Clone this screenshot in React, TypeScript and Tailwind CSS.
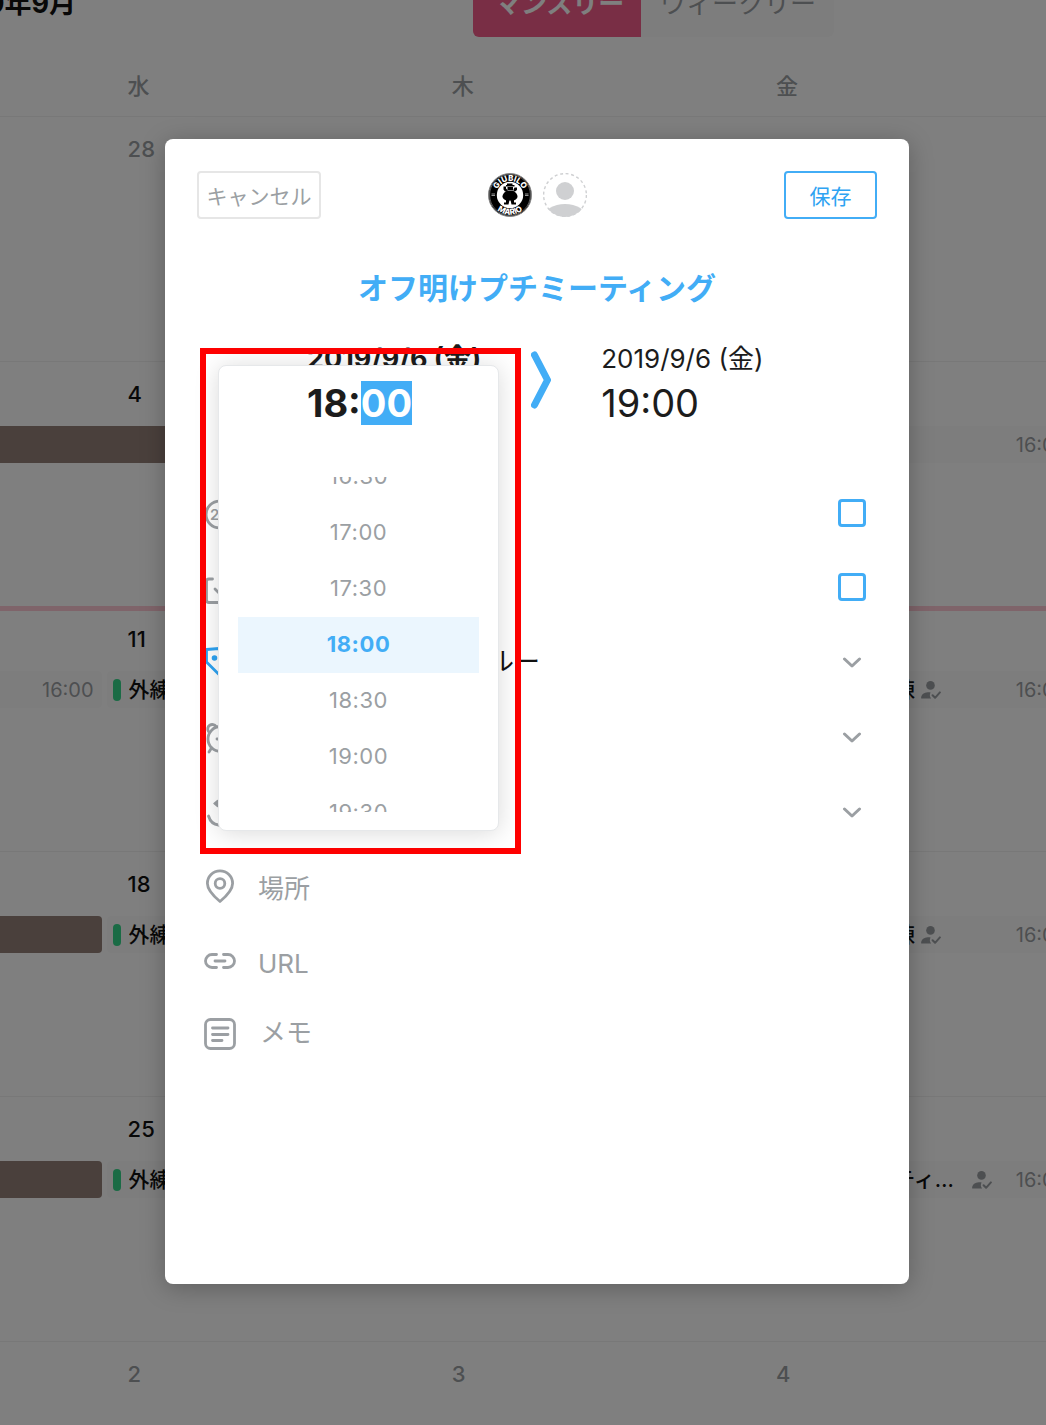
import { useEffect, useRef } from "react";
import type { ReactNode } from "react";

const TIMES = ["16:30", "17:00", "17:30", "18:00", "18:30", "19:00", "19:30"];
const SELECTED_TIME = "18:00";

type Event = { title: string; time: string };
type Week = {
  wed: string;
  thu: string;
  fri: string;
  muted?: boolean;
  today?: boolean;
  lead?: "bar" | "longBar" | "event";
  wedEvent?: Event;
  friEvent?: Event;
};

const WEEKS: Week[] = [
  { wed: "28", thu: "29", fri: "30", muted: true },
  { wed: "4", thu: "5", fri: "6", lead: "longBar", friEvent: { title: "外練", time: "16:00" } },
  {
    wed: "11",
    thu: "12",
    fri: "13",
    today: true,
    lead: "event",
    wedEvent: { title: "外練", time: "16:00" },
    friEvent: { title: "外練: 居残り練", time: "16:00" },
  },
  {
    wed: "18",
    thu: "19",
    fri: "20",
    lead: "bar",
    wedEvent: { title: "外練", time: "16:00" },
    friEvent: { title: "外練: 居残り練", time: "16:00" },
  },
  {
    wed: "25",
    thu: "26",
    fri: "27",
    lead: "bar",
    wedEvent: { title: "外練", time: "16:00" },
    friEvent: { title: "外練後: ミーティング", time: "16:00" },
  },
  { wed: "2", thu: "3", fri: "4", muted: true },
];

const UserCheckIcon = () => (
  <svg viewBox="0 0 20 18" className="h-[18px] w-5 shrink-0" fill="#9b9fa3">
    <circle cx="9.5" cy="4.4" r="4.3" />
    <path d="M.8 17.6c-.6 0-.8-.3-.7-.9.4-3.200 3-5.200 6.600-5.400 1.200-.1 2.200 0 2.900.2-1.100 1.700-1 4.200.5 6.100z" />
    <path d="M11.600 14.200l2.500 2.600 4.800-5.400" fill="none" stroke="#9b9fa3" strokeWidth="2" strokeLinecap="round" strokeLinejoin="round" />
  </svg>
);

const EventCard = ({ event }: { event: Event }) => (
  <div className="mx-0.5 flex h-[37px] items-center gap-2 rounded bg-[#fbfbfb] pr-2 pl-1.5 whitespace-nowrap">
    <span className="h-[22px] w-2 shrink-0 rounded-full bg-[#34d68a]" />
    <div className="flex min-w-0 flex-1 items-center gap-1.5">
      <span className="min-w-0 truncate text-[21px] leading-[37px] font-medium text-[#111]">{event.title}</span>
      <UserCheckIcon />
    </div>
    <span className="ml-4 text-[20px] text-[#9b9fa3]">{event.time}</span>
  </div>
);

const DayCell = ({ day, muted, event }: { day: string; muted?: boolean; event?: Event }) => (
  <div className="min-w-0">
    <div className={`flex h-16 items-center pl-[23px] text-[22px] font-medium ${muted ? "text-[#9b9fa3]" : "text-[#111]"}`}>
      {day}
    </div>
    {event && <EventCard event={event} />}
  </div>
);

const WeekRow = ({ week }: { week: Week }) => (
  <div
    className={`grid h-[245px] shrink-0 grid-cols-[10%_31%_31%_31%] ${
      week.today ? "border-t-[5px] border-[#ffc8d4]" : "border-t border-[#f0f0f0]"
    }`}
  >
    <div className={`pt-16 whitespace-nowrap ${week.today ? "-mt-1" : ""}`}>
      {week.lead === "bar" && <div className="mr-[3px] h-[37px] rounded-r bg-[#948078]" />}
      {week.lead === "longBar" && <div className="-mr-20 h-[37px] bg-[#948078]" />}
      {week.lead === "event" && (
        <div className="mr-[3px] flex h-[37px] items-center justify-end rounded-r bg-[#fbfbfb] pr-2 text-[20px] text-[#9b9fa3]">
          16:00
        </div>
      )}
    </div>
    {[
      { day: week.wed, event: week.wedEvent },
      { day: week.thu },
      { day: week.fri, event: week.friEvent },
    ].map(({ day, event }) => (
      <div key={day} className={`min-w-0 ${week.today ? "-mt-1" : ""}`}>
        <DayCell day={day} muted={week.muted} event={event} />
      </div>
    ))}
  </div>
);

const Calendar = () => (
  <div className="flex min-h-screen flex-col">
    <header className="-mt-[29px] flex h-[66px] items-center">
      <h1 className="flex w-[76px] justify-end text-[27px] font-bold whitespace-nowrap text-[#111]">2019年9月</h1>
      <div className="ml-[38%] flex h-full w-[361px] text-[26px]">
        <button type="button" className="w-[168px] rounded-l-md bg-[#f25c8a] pb-0.5 pl-1 font-bold text-white">
          マンスリー
        </button>
        <button type="button" className="flex-1 rounded-r-md bg-[#fbfbfb] pb-0.5 whitespace-nowrap text-[#9b9fa3]">
          ウィークリー
        </button>
      </div>
    </header>
    <div className="grid h-[79px] grid-cols-[10%_31%_31%_31%] pt-5 text-[22px] leading-[58px] font-medium text-[#9b9fa3]">
      <span />
      <span className="pl-[23px]">水</span>
      <span className="pl-[23px]">木</span>
      <span className="pl-[23px]">金</span>
    </div>
    {WEEKS.map((week) => (
      <WeekRow key={week.wed} week={week} />
    ))}
  </div>
);

const TeamLogo = () => (
  <svg viewBox="0 0 44 44" className="size-11">
    <circle cx="22" cy="22" r="21.500" fill="#000" stroke="#888" />
    <circle cx="22" cy="22" r="20.400" fill="none" stroke="#bbb" strokeWidth=".5" />
    <circle cx="22" cy="22" r="13.200" fill="#fff" />
    <g fill="#000">
      <path d="M19 10.500h5.500v1.500h2v1.500H18V12h1z" />
      <path d="M19.500 14h5.500v3.500h-5.500zM15.500 13.500h2.500v2l1.500 1.500v1.500h-2.500l-1.500-2zM26.500 14.500h2.500v2.500l-2 1.500h-1.500v-2z" />
      <path d="M18.500 18h7c2.500 1.500 4 3.500 4 5.500s-2 3.500-4 4h-7c-2-.5-4-2-4-4s1.500-4 4-5.500z" />
      <path d="M18 27h3.500l-1 4.500h-4.500v-2h2zM22.500 27H26v2.500h2v2h-4.500z" />
    </g>
    <path d="M3.500 21h3.500M3.500 22.500h3.500M37 21h3.500M37 22.500h3.500" stroke="#bbb" strokeWidth=".8" />
    <path id="logo-top" d="M8 22a14 14 0 0 1 28 0" fill="none" />
    <path id="logo-bottom" d="M2.300 22a19.700 19.700 0 0 0 39.400 0" fill="none" />
    <g fill="#fff" fontSize="8" fontWeight="800" textAnchor="middle">
      <text>
        <textPath href="#logo-top" startOffset="50%">GIUBILO</textPath>
      </text>
      <text>
        <textPath href="#logo-bottom" startOffset="50%">MARIO</textPath>
      </text>
    </g>
  </svg>
);

const GuestAvatar = () => (
  <svg viewBox="0 0 44 44" className="size-11">
    <defs>
      <clipPath id="guest">
        <circle cx="22" cy="22" r="22" />
      </clipPath>
    </defs>
    <circle cx="22" cy="22" r="21.400" fill="none" stroke="#cfd0d2" strokeWidth="1.400" strokeDasharray="3 2.600" />
    <circle cx="22" cy="18" r="9" fill="#cfd0d2" />
    <ellipse cx="22" cy="44" rx="21" ry="13" fill="#cfd0d2" clipPath="url(#guest)" />
  </svg>
);

const Icon = ({ children, className = "" }: { children: ReactNode; className?: string }) => (
  <svg
    viewBox="0 0 32 32"
    className={`size-8 shrink-0 overflow-visible ${className}`}
    fill="none"
    stroke="currentColor"
    strokeWidth="2.800"
    strokeLinecap="round"
    strokeLinejoin="round"
  >
    {children}
  </svg>
);

const ICONS = {
  allDay: (
    <Icon>
      <circle cx="15.500" cy="17.500" r="13.400" />
      <text x="6" y="23" fill="currentColor" stroke="none" fontSize="15" fontWeight="600">
        24
      </text>
    </Icon>
  ),
  task: (
    <Icon>
      <path d="M8.500 8H5a2.500 2.500 0 0 0-2.500 2.500V29A2.500 2.500 0 0 0 5 31.500h21a2.500 2.500 0 0 0 2.500-2.500V17M11 18l5.500 5.500L29 9" />
    </Icon>
  ),
  tag: (
    <Icon className="text-[#2ea3f2]">
      <path d="M2.500 3.500L15 2.500 29.500 17 17 30.500 2.500 16z" />
      <circle cx="10.500" cy="12" r="1.400" fill="currentColor" />
    </Icon>
  ),
  alarm: (
    <Icon>
      <circle cx="16.500" cy="18" r="12.500" />
      <path d="M4.500 10.500a4.300 4.300 0 1 1 7.500-5M28.500 10.500a4.300 4.300 0 1 0-7.500-5M7.500 27L5 31M25.500 27l2.500 4M16.500 11v7h-3.500" />
    </Icon>
  ),
  repeat: (
    <Icon>
      <path d="M4.500 20c1.500 5 4.500 8.500 10 9h6c5-.500 8-4 9-9M27.500 13c-1-4-4-5.500-8-5.500h-5" />
      <path d="M13.500 4.500v6l-3.500-3z" fill="currentColor" strokeWidth="1.500" />
    </Icon>
  ),
  place: (
    <Icon>
      <path d="M16 30.500C10 25.500 3.400 19.500 3.400 12.500a12.600 12.600 0 0 1 25.200 0c0 7-6.600 13-12.600 18z" />
      <circle cx="16" cy="12.500" r="4.800" />
    </Icon>
  ),
  link: (
    <Icon>
      <path d="M12.500 8.500H8a6.500 6.500 0 0 0 0 13h4.500M19.500 8.500H24a6.500 6.500 0 0 1 0 13h-4.500M11 15h10" />
    </Icon>
  ),
  memo: (
    <Icon>
      <rect x="1.500" y="1.500" width="29" height="29" rx="5" />
      <path d="M8.500 10h15.500M8.500 16.500h15.500M8.500 22.500h9.500" />
    </Icon>
  ),
};

const CheckRow = ({ id, icon, label }: { id: string; icon: ReactNode; label: string }) => (
  <label htmlFor={id} className="flex h-[74px] items-center gap-[22px]">
    {icon}
    <span className="flex-1">{label}</span>
    <input
      id={id}
      type="checkbox"
      className="mr-[11px] size-7 appearance-none rounded border-[3px] border-[#42adf6] checked:bg-[#42adf6]"
    />
  </label>
);

const MenuRow = ({ icon, label, active }: { icon: ReactNode; label: string; active?: boolean }) => (
  <button type="button" className="flex h-[75px] w-full items-center gap-[22px] text-left">
    {icon}
    <span className={`flex-1 ${active ? "text-[#111]" : ""}`}>{label}</span>
    <svg viewBox="0 0 20 12" className="mr-[15px] h-3 w-5" fill="none" stroke="currentColor" strokeWidth="3" strokeLinecap="round" strokeLinejoin="round">
      <path d="M2.500 3L10 10l7.500-7" />
    </svg>
  </button>
);

const FIELD = "min-w-0 flex-1 bg-transparent outline-none placeholder:text-[#9b9fa3] placeholder:opacity-100";

const TimePicker = () => {
  const inputRef = useRef<HTMLInputElement>(null);

  // the minutes are preselected so they can be typed over at once
  useEffect(() => {
    inputRef.current?.focus({ preventScroll: true });
    inputRef.current?.setSelectionRange(3, 5);
  }, []);

  return (
    <div className="absolute top-2 left-[3px] border-6 border-[#f00] pt-[11px] pr-4 pb-[17px] pl-3">
      <div className="h-[466px] w-[281px] rounded-lg border border-[#e6e8ea] bg-white px-[19px] pt-[15px] shadow-[0_2px_24px_rgba(0,0,0,0.15)]">
        <input
          ref={inputRef}
          aria-label="開始時刻"
          defaultValue={SELECTED_TIME}
          className="ml-[69px] block h-11 w-[140px] text-[38px] leading-[44px] font-bold text-[#1c1c1c] outline-none selection:bg-[#42adf6] selection:text-white"
        />
        <ul className="mt-[52px] flex h-[335px] flex-col justify-center overflow-hidden text-[22px] text-[#9b9fa3]">
          {TIMES.map((time) => (
            <li key={time} className="h-14 shrink-0">
              <button
                type="button"
                className={`h-full w-full tracking-wide ${time === SELECTED_TIME ? "bg-[#ebf6fe] font-bold text-[#42adf6]" : ""}`}
              >
                {time}
              </button>
            </li>
          ))}
        </ul>
      </div>
    </div>
  );
};

const EventDialog = () => (
  <div
    role="dialog"
    aria-label="予定の編集"
    className="min-h-[1145px] rounded-lg bg-white px-8 pt-8 shadow-[0_4px_24px_rgba(0,0,0,0.25)]"
  >
    <div className="grid grid-cols-[1fr_auto_1fr] items-center">
      <button type="button" className="h-12 w-[124px] rounded border-2 border-[#e6e6e6] pt-1 text-[21px] text-[#9b9fa3]">
        キャンセル
      </button>
      <div className="flex gap-[11px]">
        <TeamLogo />
        <GuestAvatar />
      </div>
      <button
        type="button"
        className="h-12 w-[93px] justify-self-end rounded border-2 border-[#42adf6] pt-1 text-[21px] text-[#2ea3f2]"
      >
        保存
      </button>
    </div>

    <h2 className="mt-[47px] text-center text-[30px] leading-[44px] font-bold text-[#42adf6]">
      オフ明けプチミーティング
    </h2>

    <div className="relative mt-[30px] flex h-[136px] gap-[50px] pl-[110px] text-[#1c1c1c]">
      <div className="pt-px text-[27px] leading-[36px] font-bold">2019/9/6 (金)</div>
      <svg viewBox="0 0 20 58" className="mt-[11px] h-[58px] w-5" fill="none" stroke="#42adf6" strokeWidth="7" strokeLinecap="round" strokeLinejoin="round">
        <path d="M3.500 4L16.500 29 3.500 54" />
      </svg>
      <div className="pt-px">
        <div className="text-[26px] leading-[36px]">2019/9/6 (金)</div>
        <div className="text-[38px] leading-[52px]">19:00</div>
      </div>
      <TimePicker />
    </div>

    <div className="pl-[7px] text-[26px] text-[#9b9fa3]">
      <CheckRow id="all-day" icon={ICONS.allDay} label="終日" />
      <CheckRow id="task" icon={ICONS.task} label="タスク" />
      <MenuRow icon={ICONS.tag} label="イベントカラー : ブルー" active />
      <MenuRow icon={ICONS.alarm} label="通知" />
      <MenuRow icon={ICONS.repeat} label="繰り返し" />
      <div className="flex h-[75px] items-center gap-[22px]">
        {ICONS.place}
        <input aria-label="場所" placeholder="場所" className={`pt-1 ${FIELD}`} />
      </div>
      <div className="flex h-[75px] items-center gap-[22px]">
        {ICONS.link}
        <input aria-label="URL" placeholder="URL" className={`pt-1 ${FIELD}`} />
      </div>
      <div className="flex h-[70px] items-center gap-[22px]">
        {ICONS.memo}
        <textarea aria-label="メモ" rows={1} placeholder="メモ" className={`resize-none pb-1 pl-0.5 ${FIELD}`} />
      </div>
    </div>
  </div>
);

export default function App() {
  return (
    <div className="relative h-screen min-h-[1425px] overflow-hidden bg-white font-['Inter','Noto_Sans_CJK_JP',sans-serif]">
      <Calendar />
      <div className="absolute inset-0 bg-black/50 pt-[139px] pr-[137px] pl-[165px]">
        <EventDialog />
      </div>
    </div>
  );
}
